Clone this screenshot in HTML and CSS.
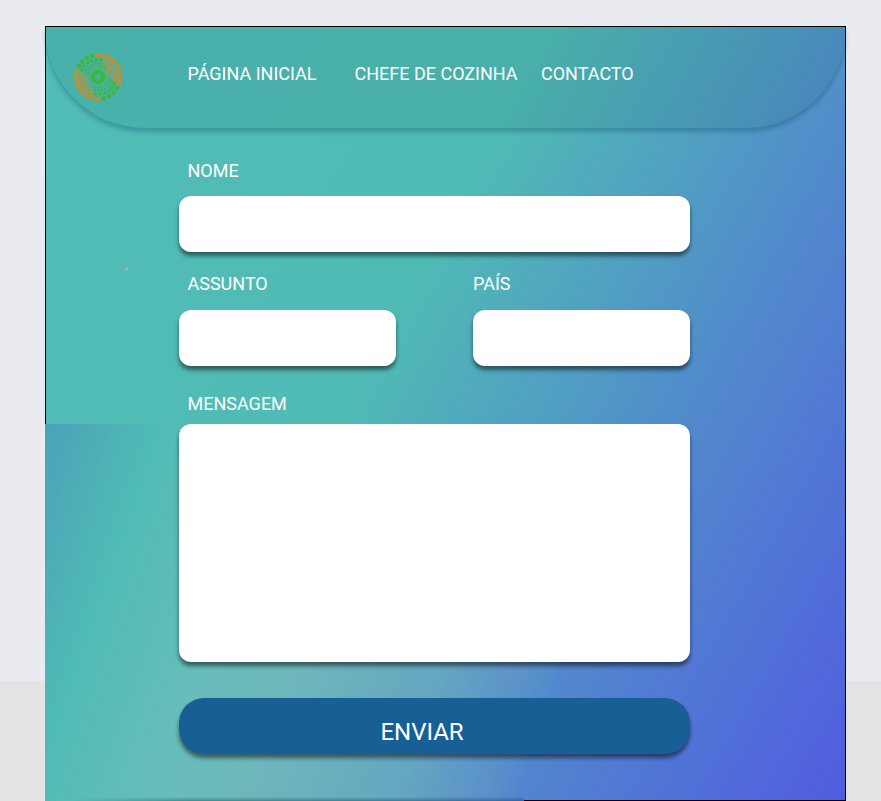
FILE: index.html
```html
<!DOCTYPE html>
<html lang="pt">
<head>
<meta charset="utf-8">
<title>Contacto</title>
<link rel="stylesheet" href="styles.css">
</head>
<body>
<main class="frame">
  <div class="glow"></div>
  <header class="header">
    <svg class="logo" viewBox="-25 -25 50 50" width="50" height="50" fill="none" stroke-linecap="round">
      <g stroke="#d98a14">
        <circle r="22" pathLength="24" stroke-width="4.6" transform="rotate(-90)" stroke-dasharray="0 1 0 1 0 1 0 1 0 1 0 1 0 1 0 5"/>
        <circle r="17.3" pathLength="24" stroke-width="3.4" transform="rotate(-67)" stroke-dasharray="0 1 0 1 0 1 0 1 0 1 0 7"/>
        <circle r="13.6" pathLength="24" stroke-width="2.4" transform="rotate(-60)" stroke-dasharray="0 1 0 1 0 1 0 1 0 8"/>
        <circle r="11" pathLength="24" stroke-width="1.6" transform="rotate(-37)" stroke-dasharray="0 1 0 1 0 10"/>
      </g>
      <g stroke="#3fb837">
        <circle r="22" pathLength="24" stroke-width="4.6" transform="rotate(30)" stroke-dasharray="0 1 0 1 0 1 0 9"/>
        <circle r="17.3" pathLength="24" stroke-width="3.4" transform="rotate(23)" stroke-dasharray="0 1 0 1 0 1 0 1 0 1 0 7"/>
        <circle r="13.6" pathLength="24" stroke-width="2.4" transform="rotate(15)" stroke-dasharray="0 1 0 1 0 1 0 1 0 1 0 1 0 6"/>
        <circle r="11" pathLength="24" stroke-width="1.7" transform="rotate(8)" stroke-dasharray="0 1 0 1 0 1 0 1 0 1 0 1 0 1 0 1 0 4"/>
        <circle r="9.2" pathLength="24" stroke-width="1" stroke-dasharray="0 1"/>
        <circle r="5.1" stroke-width="4.4"/>
      </g>
    </svg>
    <nav class="nav">
      <a class="nav-link nav-home">PÁGINA INICIAL</a>
      <a class="nav-link nav-chef">CHEFE DE COZINHA</a>
      <a class="nav-link">CONTACTO</a>
    </nav>
  </header>
  <span class="speck"></span>
  <form class="form">
    <div class="field field-name">
      <label class="label" for="nome">NOME</label>
      <input class="input" id="nome" type="text">
    </div>
    <div class="row">
      <div class="field field-half">
        <label class="label" for="assunto">ASSUNTO</label>
        <input class="input" id="assunto" type="text">
      </div>
      <div class="field field-half">
        <label class="label label-flush" for="pais">PAÍS</label>
        <input class="input" id="pais" type="text">
      </div>
    </div>
    <div class="field field-message">
      <label class="label" for="mensagem">MENSAGEM</label>
      <textarea class="input input-message" id="mensagem"></textarea>
    </div>
    <button class="submit" type="button">ENVIAR</button>
  </form>
</main>
</body>
</html>
```
FILE: styles.css
```css
* {
  box-sizing: border-box;
}

body {
  margin: 0;
  height: 801px;
  overflow: hidden;
  padding: 26px 35px 0 45px;
  background: linear-gradient(#eaebf0 681px, #e4e4e4 681px);
  font-family: Roboto, sans-serif;
  color: #fff;
}

.frame {
  position: relative;
  width: 801px;
  height: 775px;
  border: 1px solid #000;
  border-bottom: 0;
  background: linear-gradient(119.5deg, #52bcb7 0, #50bbb5 446px, #5188cd 765px, #516adb 980px, #505bdc 1078px);
}

/* bottom edge of the frame, only on the right-hand side */
.frame::after {
  content: "";
  position: absolute;
  left: 478px;
  right: -1px;
  bottom: 0;
  height: 1px;
  background: #000;
}

.glow {
  position: absolute;
  left: -1px;
  top: 397px;
  bottom: 0;
  width: 600px;
  background: linear-gradient(109deg, #4aa2b8 0, #50bbb5 107px, #67bdb9 225px, #6db6bb 319px, #65a6c1 457px, #5b93c9 528px, rgba(81, 136, 204, 0) 570px);
}

.glow::after {
  content: "";
  position: absolute;
  left: 25px;
  bottom: 0;
  width: 454px;
  height: 4px;
  background: linear-gradient(rgba(0, 0, 0, 0), rgba(0, 30, 50, 0.32));
  -webkit-mask-image: linear-gradient(90deg, transparent, #000 120px);
  mask-image: linear-gradient(90deg, transparent, #000 120px);
}

.header {
  position: relative;
  display: flex;
  align-items: center;
  width: 801px;
  height: 101px;
  margin-left: -1px;
  padding-left: 28px;
  border-radius: 0 0 100px 100px;
  background: rgba(0, 50, 50, 0.09);
  box-shadow: 0 4px 4px rgba(0, 60, 90, 0.28);
}

.logo {
  flex: none;
  margin-top: -1px;
}

.nav {
  display: flex;
  margin: -9px 0 0 64.5px;
}

.nav-link,
.label {
  font-size: 18px;
  line-height: 21px;
  white-space: nowrap;
}

.nav-home {
  width: 167px;
}

.nav-chef {
  width: 186.5px;
}

.speck {
  position: absolute;
  left: 80px;
  top: 240px;
  width: 2px;
  height: 4px;
  background: #9fb0b0;
  transform: skewX(-12deg);
}

.form {
  position: relative;
  width: 511px;
  margin: 32px 0 0 133px;
}

.field {
  display: flex;
  flex-direction: column;
  gap: 15px;
}

.row {
  display: flex;
  justify-content: space-between;
  margin-top: 21px;
}

.field-half {
  width: 217px;
  gap: 16px;
}

.field-message {
  margin-top: 27px;
  gap: 10px;
}

.label {
  padding-left: 8.5px;
}

.label-flush {
  padding-left: 0;
}

.input {
  display: block;
  width: 100%;
  height: 56px;
  margin: 0;
  padding: 0 12px;
  border: 0;
  border-radius: 12px;
  background: #fff;
  box-shadow: 0 4px 4px rgba(0, 0, 0, 0.5);
  resize: none;
}

.input-message {
  height: 238px;
}

.submit {
  display: block;
  width: 100%;
  height: 56px;
  margin-top: 36px;
  padding: 12px 25px 0 0;
  border: 0;
  border-radius: 25px;
  background: #185f95;
  box-shadow: 0 4px 4px rgba(0, 0, 0, 0.5);
  color: #fff;
  font: 24px/28px Roboto, sans-serif;
}
```
